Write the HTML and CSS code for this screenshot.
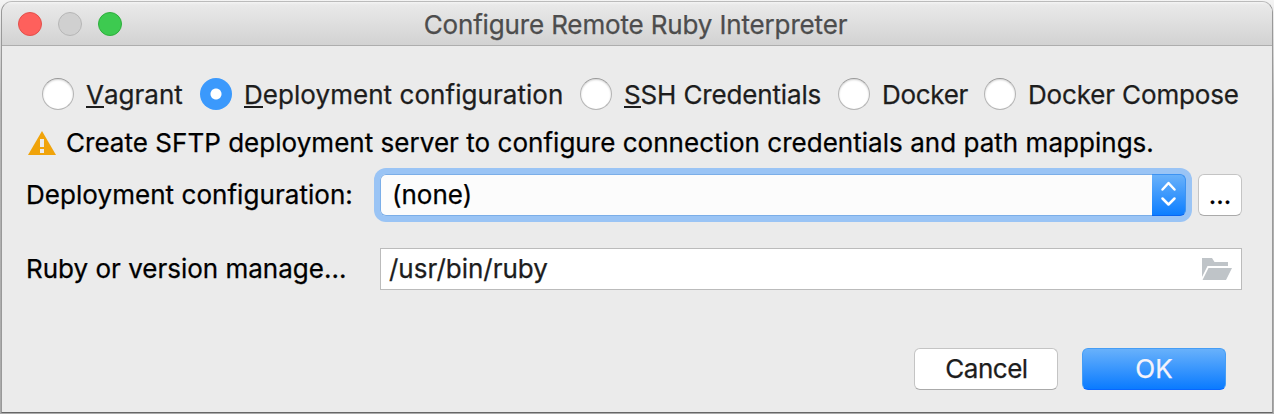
FILE: index.html
```html
<!DOCTYPE html>
<html lang="en">
<head>
<meta charset="utf-8">
<title>Configure Remote Ruby Interpreter</title>
<link rel="stylesheet" href="styles.css">
</head>
<body>
<main class="window">
  <header class="titlebar">
    <div class="lights"><span class="light close"></span><span class="light minimize"></span><span class="light zoom"></span></div>
    <h1 class="title">Configure Remote Ruby Interpreter</h1>
  </header>
  <section class="content">
    <div class="radios">
      <div class="radio"><span class="dot"></span><span class="radio-label"><u>V</u>agrant</span></div>
      <div class="radio"><span class="dot selected"></span><span class="radio-label loose"><u>D</u>eployment configuration</span></div>
      <div class="radio"><span class="dot"></span><span class="radio-label tight"><u>S</u>SH Credentials</span></div>
      <div class="radio"><span class="dot"></span><span class="radio-label tighter">Docker</span></div>
      <div class="radio"><span class="dot"></span><span class="radio-label tight">Docker Compose</span></div>
    </div>
    <div class="warning">
      <svg width="28" height="24" viewBox="0 0 28 24"><path fill="#f0a30a" d="M14 0 28 24H0Z"/><path fill="#ebebeb" d="M12 8h4v8h-4zM12 18h4v4h-4z"/></svg>
      <span class="warning-text">Create SFTP deployment server to configure connection credentials and path mappings.</span>
    </div>
    <div class="row">
      <span class="label loose">Deployment configuration:</span>
      <div class="select"><span>(none)</span>
        <span class="stepper"><svg width="34" height="42" viewBox="0 0 34 42"><path d="m10.500 15.500 6-6.500 6 6.500M10.500 24.500l6 6 6-6" fill="none" stroke="#fff" stroke-width="2.500" stroke-linecap="round" stroke-linejoin="round"/></svg></span>
      </div>
      <div class="button more"><span>...</span></div>
    </div>
    <div class="row path-row">
      <span class="label">Ruby or version manage...</span>
      <div class="field"><span>/usr/bin/ruby</span>
        <svg width="30" height="22" viewBox="0 0 30 22"><path fill="#bfc4c8" d="M0 0h10l2.500 4H26v4H5.500L0 19zM6.500 10H30l-6 12H.5z"/></svg>
      </div>
    </div>
    <footer class="actions">
      <div class="button"><span class="cancel-text">Cancel</span></div>
      <div class="button primary"><span>OK</span></div>
    </footer>
  </section>
</main>
</body>
</html>
```
FILE: styles.css
```css
* { box-sizing: border-box; }
body {
  margin: 0;
  height: 414px;
  padding: 1px;
  overflow: hidden;
  background: linear-gradient(#f4f4f4, #b4b4b4 25%, #aaa);
  font: 26px/32px Inter, "Liberation Sans", sans-serif;
  -webkit-text-stroke: .25px currentColor;
  color: #000;
  white-space: nowrap;
}
.window {
  height: 412px;
  display: flex;
  flex-direction: column;
  border: 1px solid #999;
  border-top-color: #bbb;
  border-bottom-color: #666;
  border-radius: 11px 11px 0 0;
  background: #ebebeb;
  overflow: hidden;
}
.titlebar {
  height: 44px;
  flex: none;
  display: grid;
  grid-template-columns: 1fr auto 1fr;
  align-items: center;
  padding: 0 16px;
  background: linear-gradient(#f4f4f4, #e9e9e9 3px, #d2d2d2);
  border-bottom: 1px solid #adadad;
}
.lights { display: flex; gap: 16px; }
.light { width: 24px; height: 24px; border-radius: 50%; border: 1px solid; }
.close { background: #fe605c; border-color: #e2504b; }
.minimize { background: #d0d0d0; border-color: #b6b6b6; }
.zoom { background: #3dca50; border-color: #2eae3c; }
.title { margin: 2px 3px 0 0; font: inherit; color: #4d4d4d; letter-spacing: -.15px; }
.content { padding: 32px 30px 0 25px; flex: 1; }
.radios {
  display: grid;
  grid-template-columns: 158px 380px 258px 146px 1fr;
  padding-left: 15px;
  color: #1d1d1d;
}
.radio { display: flex; align-items: center; gap: 12px; height: 32px; }
.radio-label { padding-top: 2px; }
.dot {
  width: 32px;
  height: 32px;
  flex: none;
  border-radius: 50%;
  border: 1px solid #b5b5b5;
  border-top-color: #999;
  background: #fff;
  box-shadow: inset 0 1px 2px rgba(0,0,0,.18);
}
.selected {
  border: 0;
  background: radial-gradient(circle, #fff 5px, #3b99fc 6px);
  box-shadow: none;
}
.loose { letter-spacing: .05px; }
.tight { letter-spacing: -.15px; }
.tighter { letter-spacing: -.3px; }
u { text-decoration: none; box-shadow: 0 2px #1d1d1d; display: inline-block; height: 27px; line-height: 32px; }
.warning { display: flex; align-items: center; gap: 10px; height: 32px; margin: 17px 0 15px 1px; }
.warning-text { letter-spacing: .03px; }
.row { display: grid; grid-template-columns: 353px 806px 44px; align-items: center; height: 42px; }
.label { margin-left: -1px; }
.row .more { margin-left: 12px; }
.select {
  display: flex;
  justify-content: space-between;
  align-items: center;
  height: 42px;
  padding-left: 12px;
  border-radius: 6px;
  background: #fcfcfc;
  box-shadow: inset 0 0 0 1px #7baee8, 0 0 0 6px #9ac4f5;
}
.stepper {
  width: 34px;
  height: 42px;
  border: 1px solid #3d93f2;
  border-bottom-color: #0a66f0;
  border-left: 0;
  border-radius: 0 6px 6px 0;
  background: linear-gradient(#69b1fa, #0d7eff);
}
.stepper svg { display: block; margin-top: -1px; }
.button {
  width: 144px;
  height: 42px;
  display: flex;
  justify-content: center;
  align-items: center;
  border: 1px solid #c4c4c4;
  border-bottom-color: #aaa;
  border-radius: 6px;
  background: #fff;
  color: #1d1d1d;
}
.more { width: 44px; color: #000; }
.cancel-text { letter-spacing: -.5px; padding-left: 1px; }
.path-row { margin-top: 32px; grid-template-columns: 353px 862px; }
.field {
  height: 42px;
  display: flex;
  justify-content: space-between;
  align-items: center;
  border: 1px solid #bbb;
  padding: 0 9px 0 8px;
  background: #fff;
  color: #1d1d1d;
}
.actions { display: flex; justify-content: flex-end; gap: 24px; margin-top: 58px; padding-right: 16px; }
.primary {
  border-color: #459df5;
  border-bottom-color: #0867ff;
  background: linear-gradient(#68b1fb, #0a7bff);
  color: #f5f3fa;
}
```
